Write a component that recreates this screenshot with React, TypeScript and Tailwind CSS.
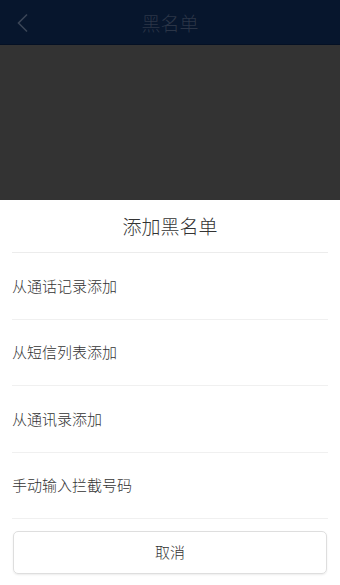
import React from "react";

const font = { fontFamily: '"Noto Sans CJK SC", "Noto Sans", sans-serif' };

export default function App() {
  const items = ["从通话记录添加", "从短信列表添加", "从通讯录添加", "手动输入拦截号码"];
  return (
    <div className="w-[340px] h-[585px] flex flex-col overflow-hidden bg-white font-light" style={font}>
      <div className="h-[45px] bg-[#07162d] border-b border-[#041024] flex items-center relative shrink-0">
        <svg className="absolute left-[16px] top-[13px]" width="14" height="20" viewBox="0 0 14 20">
          <path d="M11 1.5 L2.5 10 L11 18.5" fill="none" stroke="#3a4556" strokeWidth="1.6" />
        </svg>
        <div className="flex-1 text-center text-[19px] text-[#2b3547] leading-none">黑名单</div>
      </div>
      <div className="h-[155px] bg-[#333333] shrink-0" />
      <div className="flex-1 flex flex-col bg-white px-[12px]">
        <div className="h-[53px] flex items-center justify-center text-[19px] text-[#333] border-b border-[#ececec]">
          添加黑名单
        </div>
        {items.map((t) => (
          <div
            key={t}
            className="h-[66.5px] flex items-center text-[15px] text-[#333] border-b border-[#f0f0f0]"
          >
            {t}
          </div>
        ))}
        <div className="mt-[12px] mx-[1px] h-[43px] flex items-center justify-center rounded-[5px] border border-[#dedede] shadow-[0_1px_2px_rgba(0,0,0,0.08)] text-[15px] text-[#333]">
          取消
        </div>
      </div>
    </div>
  );
}
